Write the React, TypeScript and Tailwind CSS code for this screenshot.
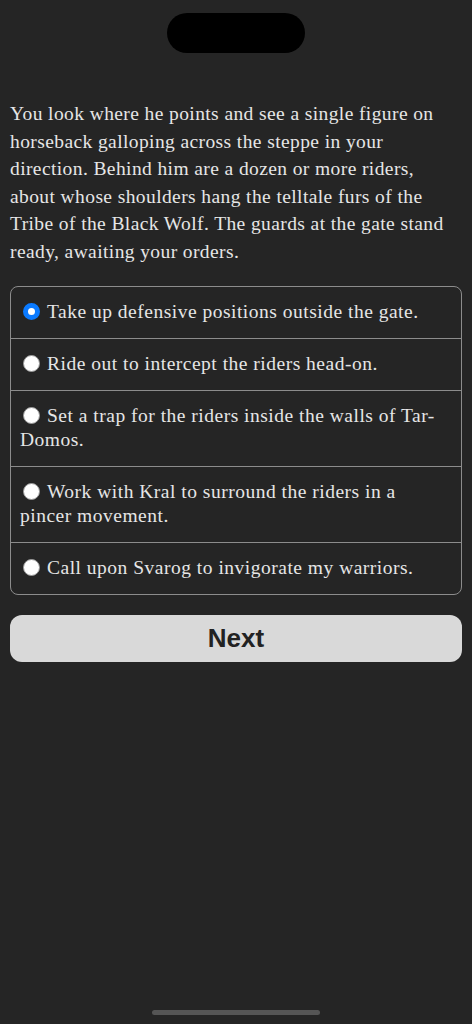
const options = [
  "Take up defensive positions outside the gate.",
  "Ride out to intercept the riders head-on.",
  "Set a trap for the riders inside the walls of Tar-Domos.",
  "Work with Kral to surround the riders in a pincer movement.",
  "Call upon Svarog to invigorate my warriors.",
];

export default function App() {
  const selected = 0;

  return (
    <div className="min-h-[1024px] bg-[#252525] flex flex-col font-['Liberation_Serif',serif] text-[#e6e6e6]">
      <div className="flex justify-center pt-[13px]">
        <div className="w-[138px] h-[40px] rounded-full bg-black" />
      </div>

      <div className="px-[10px] pt-[47px]">
        <p className="text-[19.5px] leading-[27.6px] tracking-[0.4px]">
          You look where he points and see a single figure on horseback galloping across the steppe in your
          direction. Behind him are a dozen or more riders, about whose shoulders hang the telltale furs of the
          Tribe of the Black Wolf. The guards at the gate stand ready, awaiting your orders.
        </p>

        <div className="mt-[20px] border border-[#8c8c8c] rounded-[8px] overflow-hidden">
          {options.map((opt, i) => (
            <div
              key={i}
              className={`px-[9px] py-[13.5px] text-[19.5px] leading-[24px] tracking-[0.5px] ${
                i > 0 ? "border-t border-[#8c8c8c]" : ""
              }`}
            >
              <span
                className={`inline-block align-[-2px] w-[17px] h-[17px] rounded-full mr-[7px] ml-[3px] ${
                  i === selected
                    ? "bg-white border-[5px] border-[#0a7aff]"
                    : "bg-white border border-[#9a9a9a]"
                }`}
              />
              {opt}
            </div>
          ))}
        </div>

        <button className="mt-[20px] w-full h-[47px] rounded-[12px] bg-[#d9d9d9] text-[#222] font-['Liberation_Sans',sans-serif] font-bold text-[26px]">
          Next
        </button>
      </div>

      <div className="flex-1" />
      <div className="flex justify-center pb-[9px]">
        <div className="w-[168px] h-[5px] rounded-full bg-[#555]" />
      </div>
    </div>
  );
}
